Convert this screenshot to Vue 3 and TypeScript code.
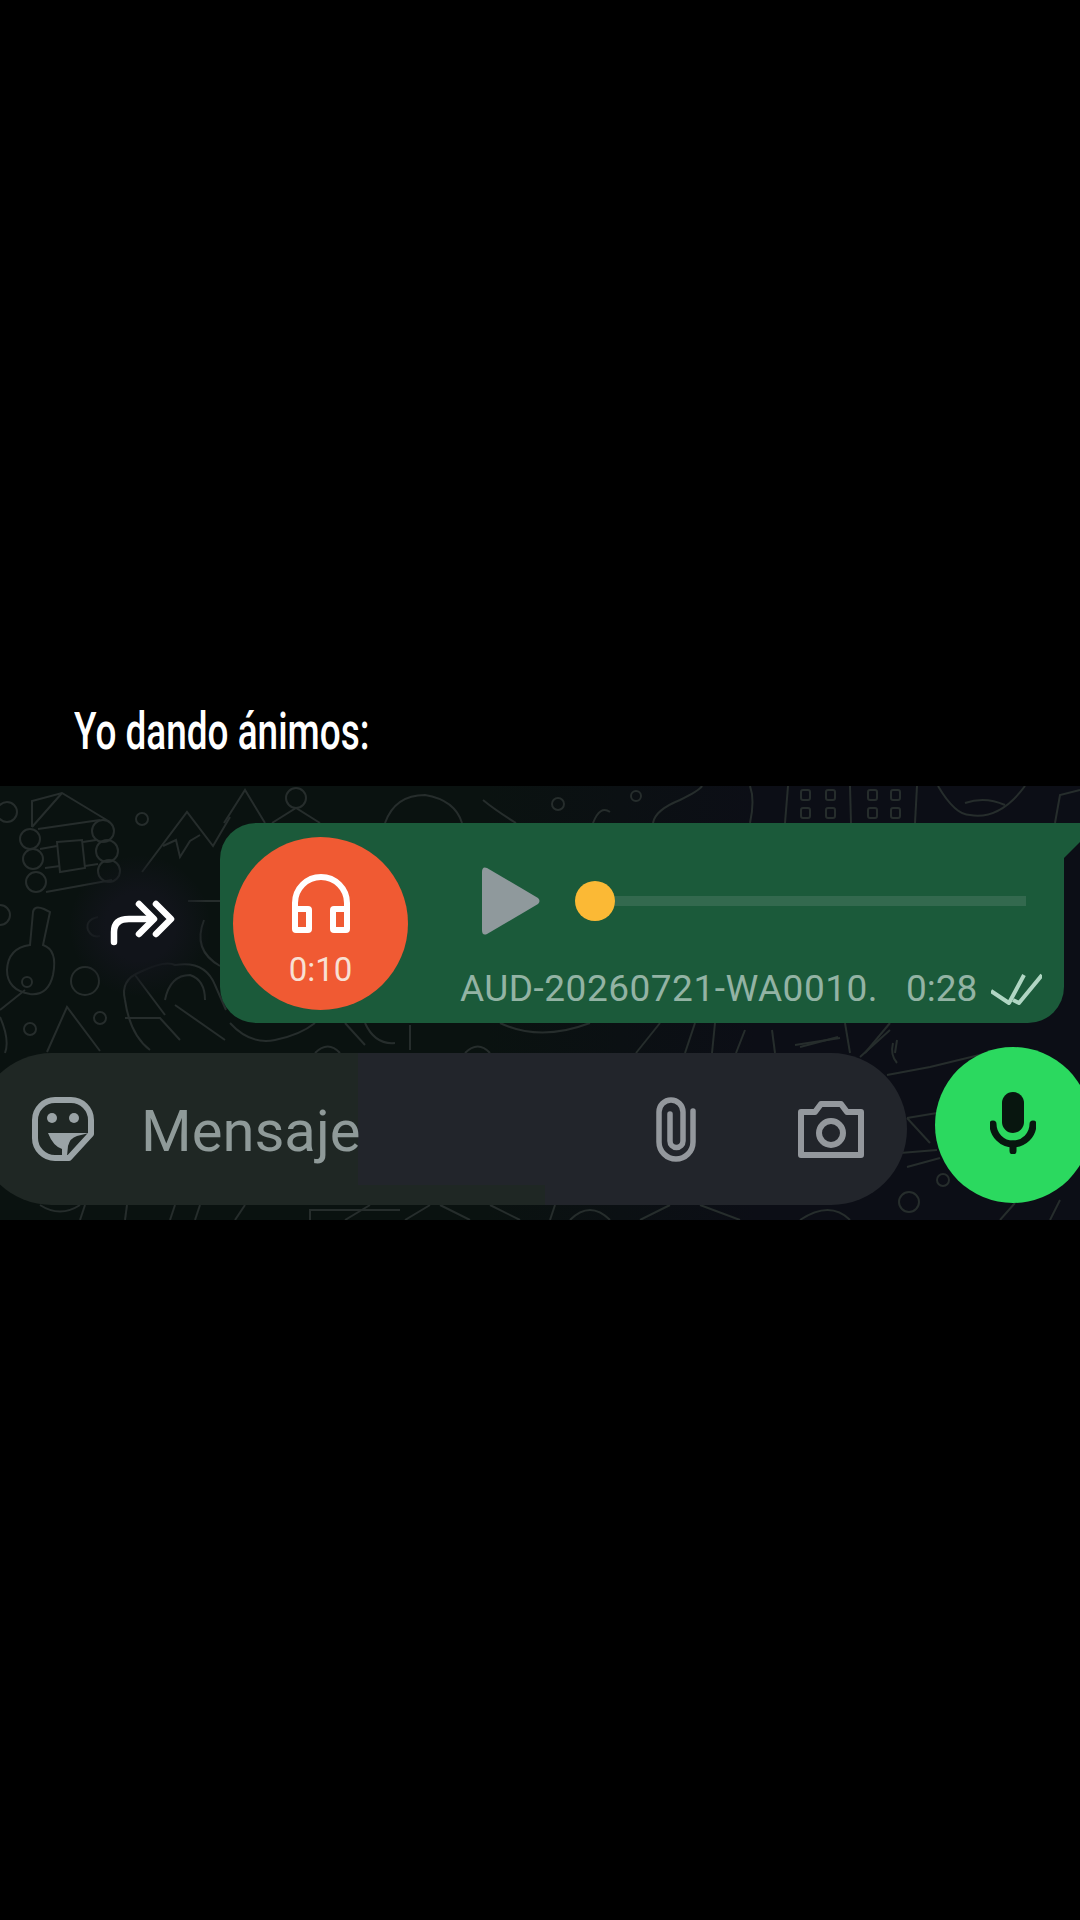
<script setup lang="ts">
// wallpaper doodles, in page coordinates (the svg viewBox starts at y=786)
const doodles: string[] = [
  // cabin
  'M32 827V801L62 793L110 822', 'M32 827L62 793', 'M38 829L100 820', 'M40 849L57 846', 'M83 842L96 840',
  'M45 868L60 866', 'M85 866L98 864', 'M46 892L112 880', 'M57 842L82 840L85 868L60 872Z',
  // mountain
  'M142 872L187 812L213 846L230 817', 'M163 846L176 840L180 857L190 841L200 835',
  // bottle, triangle
  'M33 912Q34 905 44 909L50 912L43 945Q58 950 53 975Q48 996 30 994Q7 990 7 970Q8 948 30 945Z',
  'M0 1010L25 990', 'M47 1052L67 1007L100 1051', 'M0 1017Q10 1040 5 1053',
  // behind the forward arrow
  'M188 901H220', 'M98 917Q85 920 88 930Q92 938 100 936', 'M204 920Q192 950 220 966',
  // shrimp
  'M125 1000Q120 980 140 972Q165 960 175 965Q205 960 215 985L226 1010', 'M125 1000Q130 1035 150 1050',
  'M135 975L165 1015', 'M165 1000Q170 975 190 975Q205 980 205 1000', 'M125 1018H160L180 1040', 'M175 1005L225 1040',
  // top strip
  'M224 823L245 790L265 823', 'M272 823L296 808L320 823', 'M385 823Q395 795 425 795Q455 800 462 823',
  'M483 800Q495 810 516 823', 'M653 823Q655 810 680 800Q700 790 702 786', 'M593 823Q600 805 610 812',
  'M750 823Q755 800 750 786', 'M785 823L788 786', 'M851 823L850 786', 'M915 823L917 786',
  'M938 786Q955 815 970 815Q1000 820 1025 786', 'M965 803Q985 796 1005 805', 'M1055 823L1060 795L1080 790',
  // strip under the bubble
  'M230 1023Q250 1045 275 1040Q300 1035 315 1023', 'M345 1023L365 1045', 'M365 1023Q375 1045 395 1043', 'M410 1025V1050',
  'M500 1023Q540 1042 590 1023', 'M636 1053L660 1023', 'M685 1053L695 1023', 'M712 1053L715 1023', 'M736 1053L745 1030',
  'M775 1053L772 1030', 'M800 1047L838 1037', 'M850 1053L845 1023', 'M865 1053L890 1023', 'M895 1053L897 1040',
  'M315 1053Q328 1040 340 1053', 'M465 1053Q478 1040 490 1053',
  // right of the input
  'M887 1075L930 1067L1000 1050', 'M907 1118L937 1113', 'M907 1118L930 1143', 'M900 1153L937 1150', 'M907 1167L940 1158',
  'M795 1045L840 1038', 'M860 1057L890 1030', 'M893 1043Q890 1055 897 1063',
  // bottom strip
  'M40 1205Q60 1218 80 1205', 'M80 1220L85 1205', 'M125 1220L127 1205', 'M170 1220L175 1205', 'M195 1220L200 1205',
  'M235 1220L245 1205', 'M310 1220V1210H400', 'M345 1220L370 1205', 'M405 1220L430 1205', 'M440 1205L470 1220',
  'M490 1205L520 1220', 'M550 1220L555 1205', 'M570 1220Q590 1200 610 1220', 'M640 1220L670 1205', 'M700 1205L740 1220',
  'M800 1220Q830 1200 850 1220', 'M1000 1220L1015 1203', 'M1050 1220L1060 1200',
]

const rings: [number, number, number][] = [
  [30, 839, 10], [33, 859, 10], [36, 882, 10], [103, 831, 11], [107, 851, 11], [109, 871, 11],
  [7, 812, 10], [142, 819, 6], [85, 981, 14], [100, 1018, 6], [30, 1029, 6], [27, 982, 5], [0, 915, 10],
  [296, 798, 10], [558, 804, 6], [636, 796, 5], [909, 1202, 10], [943, 1180, 6],
]

// little windows of the building in the top strip
const windows: [number, number][] = [
  [801, 790], [826, 790], [801, 808], [826, 808], [868, 790], [891, 790], [868, 808], [891, 808],
]
</script>

<template>
  <div class="page">
    <header class="caption">
      <p class="caption__text">Yo dando ánimos:</p>
    </header>

    <section class="chat">
      <svg class="chat__doodles" viewBox="0 786 1080 434" fill="none" stroke="#262d2c" stroke-width="2">
        <path v-for="d in doodles" :key="d" :d="d" />
        <circle v-for="r in rings" :key="r.join()" :cx="r[0]" :cy="r[1]" :r="r[2]" />
        <rect v-for="w in windows" :key="w.join()" :x="w[0]" :y="w[1]" width="9" height="10" rx="2" />
      </svg>
      <div class="chat__halo" />

      <div class="message">
        <svg class="message__forward" viewBox="0 0 68 46" fill="none" stroke="#fff" stroke-width="6.5" stroke-linecap="round" stroke-linejoin="round">
          <path d="M7 42V32Q7 19 22 19H44" />
          <path d="M32 4L47 19L32 34" />
          <path d="M49 4L64 19L49 34" />
        </svg>

        <div class="bubble">
          <div class="avatar">
            <svg class="avatar__icon" viewBox="0 0 60 60" fill="none" stroke="#fff" stroke-width="6" stroke-linejoin="round">
              <path d="M4 40V30A26 26 0 0 1 56 30V40" />
              <rect x="4" y="36" width="14" height="21" rx="1" />
              <rect x="42" y="36" width="14" height="21" rx="1" />
            </svg>
            <span class="avatar__time">0:10</span>
          </div>

          <div class="audio">
            <div class="audio__player">
              <svg class="audio__play" viewBox="0 0 60 70">
                <path d="M1 6Q1 0 6 2L57 32Q60 35 57 38L6 68Q1 70 1 64Z" fill="#8f999c" />
              </svg>
              <span class="audio__thumb" />
              <span class="audio__track" />
            </div>
            <div class="audio__meta">
              <span class="audio__name">AUD-20260721-WA0010.</span>
              <span class="audio__length">0:28</span>
              <svg class="audio__checks" viewBox="0 0 51 32" fill="none" stroke="#b0d6c3" stroke-width="4" stroke-linejoin="round">
                <path d="M0 18L18 30L33 2" />
                <path d="M22 27L28 30L51 2" />
              </svg>
            </div>
          </div>
        </div>
      </div>

      <div class="composer">
        <div class="input">
          <svg class="input__sticker" viewBox="0 0 64 66" fill="none" stroke="#9aa3a6" stroke-width="6" stroke-linejoin="round">
            <path d="M24 4H40A20 20 0 0 1 60 24V38L38 62H24A20 20 0 0 1 4 42V24A20 20 0 0 1 24 4Z" />
            <circle cx="21" cy="22" r="5" fill="#9aa3a6" stroke="none" />
            <circle cx="43" cy="22" r="5" fill="#9aa3a6" stroke="none" />
            <path d="M17 37H58L46 40Q39 42 37 50L36 60H31V53Q22 50 17 37Z" fill="#9aa3a6" stroke="none" />
          </svg>
          <span class="input__placeholder">Mensaje</span>
          <svg class="input__clip" viewBox="0 0 42 66" fill="none" stroke="#94989d" stroke-width="5.5" stroke-linecap="round">
            <path d="M38 15V46A17 17 0 0 1 4 46V16A12 12 0 0 1 28 16V45A6.5 6.5 0 0 1 15 45V18" />
          </svg>
          <svg class="input__camera" viewBox="0 0 66 59" fill="none" stroke="#94989d" stroke-width="6" stroke-linejoin="round">
            <path d="M3 12H17L23 4H43L49 12H63V55H3Z" />
            <circle cx="33" cy="33" r="12" />
          </svg>
        </div>

        <button class="mic" type="button" aria-label="Grabar">
          <svg class="mic__icon" viewBox="0 0 46 62" fill="none" stroke="#08160f" stroke-width="7" stroke-linecap="round">
            <rect x="12" y="0" width="22" height="41" rx="11" fill="#08160f" stroke="none" />
            <path d="M3 32A20 20 0 0 0 43 32" />
            <path d="M23 52V59" />
          </svg>
        </button>
      </div>
    </section>
  </div>
</template>

<style scoped>
.page {
  width: 1080px;
  height: 1920px;
  overflow: hidden;
  background: #000;
  font-family: Roboto, "Liberation Sans", sans-serif;
}

.caption {
  display: flex;
  align-items: flex-start;
  height: 786px;
  padding: 702px 0 0 74px;
  box-sizing: border-box;
}

.caption__text {
  margin: 0;
  color: #fff;
  font-size: 52px;
  line-height: 60px;
  font-weight: 500;
  white-space: nowrap;
  transform: scaleX(0.71);
  transform-origin: left center;
}

.chat {
  position: relative;
  height: 434px;
  padding-top: 37px;
  box-sizing: border-box;
  overflow: hidden;
  background: linear-gradient(90deg, #0a1210 0, #0a1210 45%, #0c0e16 70%, #0c0e16 100%);
}

.chat__doodles {
  position: absolute;
  inset: 0;
  width: 1080px;
  height: 434px;
}

.chat__halo {
  position: absolute;
  left: 70px;
  top: 70px;
  width: 140px;
  height: 140px;
  border-radius: 50%;
  background: radial-gradient(circle, #11141a 35%, rgba(17, 20, 26, 0) 72%);
}

.message {
  position: relative;
  display: flex;
  align-items: center;
  padding-left: 107px;
}

.message__forward {
  width: 68px;
  height: 46px;
  margin-right: 45px;
  flex-shrink: 0;
}

.bubble {
  position: relative;
  display: flex;
  align-items: center;
  width: 844px;
  height: 200px;
  padding-left: 13px;
  box-sizing: border-box;
  border-radius: 36px 0 36px 36px;
  background: #1b5a3a;
}

.bubble::after {
  content: "";
  position: absolute;
  left: 100%;
  top: 0;
  width: 16px;
  height: 35px;
  background: #1b5a3a;
  clip-path: polygon(0 0, 100% 0, 100% 19px, 0 100%);
}

.avatar {
  display: flex;
  flex-direction: column;
  align-items: center;
  width: 175px;
  height: 173px;
  border-radius: 50%;
  background: #f05a33;
  flex-shrink: 0;
}

.avatar__icon {
  width: 60px;
  height: 60px;
  margin-top: 36px;
}

.avatar__time {
  margin-top: 21px;
  color: #f8e0d4;
  font-size: 33px;
  line-height: 32px;
}

.audio {
  align-self: flex-start;
  width: 600px;
  margin: 43px 0 0 52px;
}

.audio__player {
  display: flex;
  align-items: center;
  padding-left: 21px;
}

.audio__play {
  width: 60px;
  height: 70px;
  flex-shrink: 0;
}

.audio__thumb {
  width: 40px;
  height: 40px;
  margin-left: 34px;
  border-radius: 50%;
  background: #fbb935;
  flex-shrink: 0;
}

.audio__track {
  width: 411px;
  height: 10px;
  background: #33694e;
}

.audio__meta {
  display: flex;
  align-items: center;
  margin-top: 31px;
  color: #93b3a4;
  font-size: 37px;
  line-height: 44px;
  white-space: nowrap;
}

.audio__name {
  width: 446px;
  letter-spacing: 0.5px;
}

.audio__length {
  width: 85px;
}

.audio__checks {
  width: 51px;
  height: 32px;
}

.composer {
  position: relative;
  display: flex;
  align-items: flex-start;
  margin-top: 30px;
  margin-left: -24px;
}

.input {
  display: flex;
  align-items: center;
  width: 931px;
  height: 152px;
  padding-left: 54px;
  box-sizing: border-box;
  border-radius: 76px;
  flex-shrink: 0;
  background:
    linear-gradient(#1f2724, #1f2724) left top / 382px 100% no-repeat,
    linear-gradient(#1f2724, #1f2724) left bottom / 569px 20px no-repeat,
    #22252b;
}

.input__sticker {
  width: 66px;
  height: 66px;
  flex-shrink: 0;
}

.input__placeholder {
  width: 514px;
  margin-left: 45px;
  padding-top: 4px;
  color: #8f9a99;
  font-size: 58px;
  line-height: 66px;
  flex-shrink: 0;
}

.input__clip {
  width: 42px;
  height: 66px;
  flex-shrink: 0;
}

.input__camera {
  width: 66px;
  height: 59px;
  margin-left: 101px;
  flex-shrink: 0;
}

.mic {
  display: flex;
  align-items: center;
  justify-content: center;
  width: 156px;
  height: 156px;
  margin: -6px 0 0 28px;
  padding: 0 0 4px;
  border: none;
  border-radius: 50%;
  background: #2bd95f;
  flex-shrink: 0;
}

.mic__icon {
  width: 46px;
  height: 62px;
}
</style>
